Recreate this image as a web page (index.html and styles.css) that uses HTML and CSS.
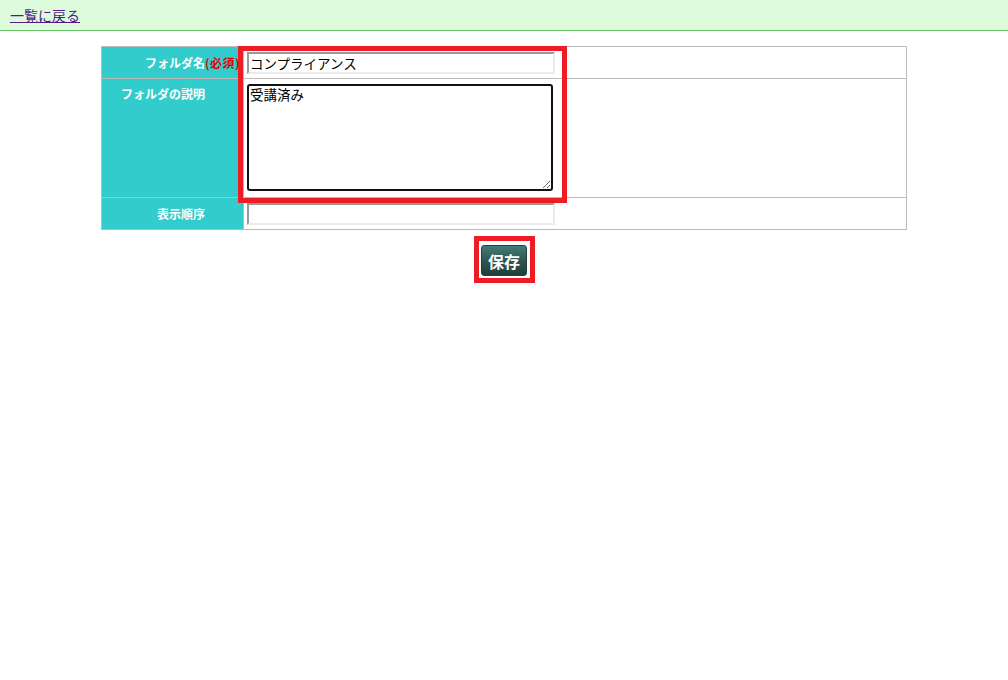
FILE: index.html
```html
<!DOCTYPE html>
<html lang="ja">
<head>
    <meta charset="UTF-8">
    <meta name="viewport" content="width=device-width, initial-scale=1.0">
    <title>フォルダ編集</title>
    <link rel="stylesheet" href="styles.css">
</head>
<body>
    <div class="topbar">
        <a href="#" class="back-link">一覧に戻る</a>
    </div>

    <div class="page">
        <form id="folderForm">
            <table class="form-table">
                <tr class="row-short">
                    <th><span class="label">フォルダ名<span class="required">(必須)</span></span></th>
                    <td><input type="text" class="field" name="name" value="コンプライアンス"></td>
                </tr>
                <tr class="row-tall">
                    <th class="top"><span class="label">フォルダの説明</span></th>
                    <td><textarea class="area" name="description">受講済み</textarea></td>
                </tr>
                <tr class="row-short">
                    <th><span class="label">表示順序</span></th>
                    <td><input type="text" class="field" name="order" value=""></td>
                </tr>
            </table>

            <div class="actions">
                <button type="submit" class="save-btn">保存</button>
            </div>
        </form>
    </div>

    <!-- annotation boxes drawn over the screenshot -->
    <div class="mark mark-fields"></div>
    <div class="mark mark-save"></div>
</body>
</html>
```

FILE: styles.css
```css
html,
body {
    height: 100%;
}

body {
    font-family: "Noto Sans CJK JP", "Noto Sans", sans-serif;
    background-color: #fff;
    margin: 0;
    padding: 0;
    color: #000;
    position: relative;
}

.topbar {
    height: 31px;
    background-color: #dcfcdc;
    border-bottom: 1px solid #66c466;
    padding-left: 10px;
    box-sizing: border-box;
    line-height: 30px;
}

.back-link {
    font-size: 14px;
    color: #551a8b;
    text-decoration: underline;
    position: relative;
    top: -1px;
}

.page {
    padding-top: 15px;
}

.form-table {
    width: 806px;
    margin: 0 auto;
    border-collapse: collapse;
    border: 1px solid #bbb;
}

.form-table th,
.form-table td {
    border: 1px solid #bbb;
    padding: 0;
}

.form-table th {
    width: 103px;
    padding-right: 38px;
    background-color: #33cccc;
    color: #fff;
    font-size: 12px;
    font-weight: bold;
    text-align: right;
    vertical-align: middle;
}

.form-table th.top {
    vertical-align: top;
    padding-top: 6px;
}

.form-table td {
    padding: 0 3px;
    vertical-align: middle;
}

.row-short {
    height: 32px;
}

.row-tall td {
    padding-top: 5px;
    padding-bottom: 6px;
}

.label {
    position: relative;
    white-space: nowrap;
}

.required {
    position: absolute;
    left: 100%;
    top: 0;
    color: #e00000;
    letter-spacing: 0.5px;
}

.field {
    display: block;
    width: 308px;
    height: 22px;
    padding: 0 1px;
    box-sizing: border-box;
    border-style: solid;
    border-width: 2px;
    border-color: #9a9a9a #ebebeb #ebebeb #9a9a9a;
    font-family: "Noto Sans CJK JP", sans-serif;
    font-size: 13.5px;
    line-height: 18px;
    outline: none;
}

.area {
    display: block;
    width: 306px;
    height: 107px;
    margin: 0;
    padding: 0 1px;
    box-sizing: border-box;
    border: 2px solid #111;
    border-radius: 3px;
    font-family: "Noto Sans CJK JP", sans-serif;
    font-size: 13.5px;
    line-height: 17px;
    outline: none;
}

.actions {
    text-align: center;
    padding-top: 15px;
}

.save-btn {
    width: 46px;
    height: 31px;
    padding: 0;
    border: 1px solid #23403c;
    border-radius: 3px;
    background: linear-gradient(#437c76, #2c5550 55%, #243d39);
    color: #fff;
    font-family: "Noto Sans CJK JP", sans-serif;
    font-size: 16px;
    font-weight: bold;
    cursor: pointer;
}

.mark {
    position: absolute;
    z-index: 2;
    border: 5px solid #ee1c24;
    box-sizing: border-box;
}

.mark-fields {
    left: 238px;
    top: 46px;
    width: 329px;
    height: 157px;
}

.mark-save {
    left: 474px;
    top: 236px;
    width: 61px;
    height: 47px;
}
```
